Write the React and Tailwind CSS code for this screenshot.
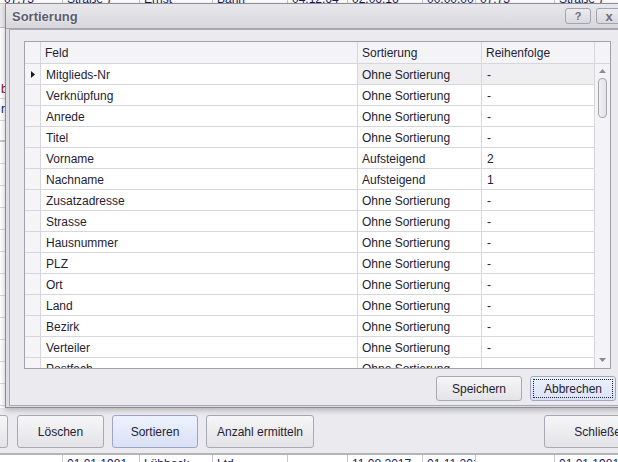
import React from "react";

const rows = [
  ["Mitglieds-Nr", "Ohne Sortierung", "-"],
  ["Verknüpfung", "Ohne Sortierung", "-"],
  ["Anrede", "Ohne Sortierung", "-"],
  ["Titel", "Ohne Sortierung", "-"],
  ["Vorname", "Aufsteigend", "2"],
  ["Nachname", "Aufsteigend", "1"],
  ["Zusatzadresse", "Ohne Sortierung", "-"],
  ["Strasse", "Ohne Sortierung", "-"],
  ["Hausnummer", "Ohne Sortierung", "-"],
  ["PLZ", "Ohne Sortierung", "-"],
  ["Ort", "Ohne Sortierung", "-"],
  ["Land", "Ohne Sortierung", "-"],
  ["Bezirk", "Ohne Sortierung", "-"],
  ["Verteiler", "Ohne Sortierung", "-"],
  ["Postfach", "Ohne Sortierung", "-"],
];

const bgCells = [63, 77, 73, 75, 60, 75, 53, 79, 70];

function BgRow({ texts, offset }) {
  return (
    <div className="flex h-full overflow-hidden">
      {bgCells.map((w, i) => (
        <div
          key={i}
          className="relative shrink-0 border-r border-[#c8c8d0] overflow-hidden"
          style={{ width: w }}
        >
          <div className="absolute left-[4px] whitespace-nowrap text-[12px] text-[#1a1a60]" style={{ top: offset }}>
            {texts[i % texts.length]}
          </div>
        </div>
      ))}
    </div>
  );
}

function Btn({ children, w, blue, focus, h = "h-[25px]" }) {
  return (
    <div
      className={`${h} shrink-0 rounded-[3px] border flex items-center justify-center text-[12px] text-[#1f2233] ${
        blue
          ? "border-[#9ea6c4] bg-gradient-to-b from-[#eef2fd] to-[#d9e1f7]"
          : "border-[#a9a9b3] bg-gradient-to-b from-[#f6f6f8] to-[#e4e4e8]"
      }`}
      style={{ width: w }}
    >
      {focus ? (
        <div className="m-[2px] w-full h-[calc(100%-4px)] border border-dotted border-[#202030] flex items-center justify-center">
          {children}
        </div>
      ) : (
        children
      )}
    </div>
  );
}

export default function App() {
  return (
    <div className="relative w-[618px] h-[462px] overflow-hidden bg-white font-['Liberation_Sans',Arial,sans-serif] text-[12px] text-[#1f2233]">
      {/* background application */}
      <div className="flex flex-col h-full">
        <div className="h-[408px] flex flex-col">
          <div className="h-[4px] border-b border-[#c8c8d0]">
            <BgRow texts={["07.73", "Straße 7", "Ernst", "Bahn", "04.12.64", "02.06.16", "00.00.00"]} offset={-10} />
          </div>
          <div className="flex-1 flex flex-col">
            <div className="h-[24px] bg-[#ececf0] border-b border-[#c0c0c8]"></div>
            <div className="h-[49px] bg-white"></div>
            <div className="h-[22px] border-b border-[#d8d8de] pl-[1px] pt-[3px] text-[#7a1020]">b</div>
            <div className="h-[22px] border-b border-[#d8d8de] pl-[1px] pt-[1px] text-[#10208a]">r</div>
            <div className="h-[21px] border-b-2 border-[#c8c8d0]"></div>
            {Array.from({ length: 12 }).map((_, i) => (
              <div key={i} className="h-[22px] border-b border-[#d8d8de]"></div>
            ))}
          </div>
        </div>
        <div className="h-[47px] bg-[#ebebef] border-b-2 border-[#b4b4bc] flex items-start pt-[7px] pl-[17px] gap-[8px] relative">
          <div className="absolute left-[-60px] top-[7px]">
            <Btn w={68} h="h-[33px]">Neu</Btn>
          </div>
          <Btn w={87} h="h-[33px]">Löschen</Btn>
          <Btn w={86} h="h-[33px]" blue>Sortieren</Btn>
          <Btn w={108} h="h-[33px]">Anzahl ermitteln</Btn>
          <div className="ml-[222px]">
            <Btn w={114} h="h-[33px]">Schließen</Btn>
          </div>
        </div>
        <div className="flex-1">
          <BgRow texts={["", "01.01.1981", "Lübbeck", "Ltd", "", "11.08.2017", "01.11.2019"]} offset={0} />
        </div>
      </div>

      {/* dialog window */}
      <div className="absolute left-[5px] top-[3px] w-[640px] h-[405px] border border-[#8c8c96] bg-[#dcdce2] flex flex-col shadow-[0_2px_6px_rgba(0,0,0,0.25)]">
        {/* title bar */}
        <div className="h-[25px] shrink-0 flex items-center bg-gradient-to-b from-[#e8e8ec] to-[#d6d6dc] border-b border-[#a6a6ae] relative">
          <span className="pl-[6px] pt-[1px] text-[13px] font-bold text-[#5c5c6e] [text-shadow:0_0_3px_rgba(255,255,255,0.9)]">
            Sortierung
          </span>
          <div className="absolute left-[559px] top-[4px] flex gap-[5px]">
            <div className="w-[26px] h-[16px] rounded-[3px] border border-[#a4a4ae] bg-gradient-to-b from-[#ececf0] to-[#d8d8de] flex items-center justify-center text-[11px] font-bold text-[#6e6e78] leading-none">
              ?
            </div>
            <div className="w-[26px] h-[16px] rounded-[3px] border border-[#a4a4ae] bg-gradient-to-b from-[#ececf0] to-[#d8d8de] flex items-center justify-center text-[13px] font-bold text-[#6e6e78] leading-none">
              x
            </div>
          </div>
        </div>
        {/* client */}
        <div className="flex-1 ml-[3px] mb-[1px] border border-[#a8a8b2] bg-[#ebebef] flex flex-col pl-[14px] pt-[11px]">
          {/* grid */}
          <div className="w-[587px] h-[328px] border border-[#a2a2ac] bg-white flex overflow-hidden">
            <div className="w-[570px] flex flex-col">
              {/* header */}
              <div className="h-[22px] shrink-0 flex border-b border-[#d6d6dc] bg-[#f4f4f6]">
                <div className="w-[16px] border-r border-[#d6d6dc]"></div>
                <div className="w-[317px] border-r border-[#d6d6dc] pl-[4px] pt-[1px] flex items-center">Feld</div>
                <div className="w-[124px] border-r border-[#d6d6dc] pl-[4px] pt-[1px] flex items-center">Sortierung</div>
                <div className="w-[113px] border-r border-[#d6d6dc] pl-[4px] pt-[1px] flex items-center">Reihenfolge</div>
              </div>
              <div className="flex-1 overflow-hidden">
                {rows.map((r, i) => (
                  <div key={i} className="h-[21px] flex border-b border-[#d6d6dc]">
                    <div className="w-[16px] shrink-0 border-r border-[#d6d6dc] bg-[#f5f5f7] flex items-center justify-center">
                      {i === 0 && (
                        <svg width="4" height="7" viewBox="0 0 4 7">
                          <path d="M0 0 L4 3.5 L0 7 Z" fill="#1a1a1a" />
                        </svg>
                      )}
                    </div>
                    <div className="w-[317px] shrink-0 border-r border-[#d6d6dc] pl-[5px] pt-[1px] flex items-center whitespace-nowrap">
                      {r[0]}
                    </div>
                    <div className={`w-[124px] shrink-0 border-r border-[#d6d6dc] pl-[4px] pt-[1px] flex items-center whitespace-nowrap ${i === 0 ? "bg-[#efeff2]" : ""}`}>
                      {r[1]}
                    </div>
                    <div className={`w-[113px] shrink-0 border-r border-[#d6d6dc] pl-[5px] pt-[1px] flex items-center ${i === 0 ? "bg-[#efeff2]" : ""}`}>
                      {r[2]}
                    </div>
                  </div>
                ))}
              </div>
            </div>
            {/* scrollbar */}
            <div className="w-[15px] flex flex-col">
              <div className="h-[22px] shrink-0 bg-[#f4f4f6] border-b border-[#d6d6dc]"></div>
              <div className="flex-1 bg-[#f4f4f6] flex flex-col items-center pt-[5px] pb-[6px]">
                <svg width="7" height="4" viewBox="0 0 7 4">
                  <path d="M0 4 L3.5 0 L7 4 Z" fill="#8a8a94" />
                </svg>
                <div className="mt-[5px] w-[9px] h-[40px] rounded-[4px] border border-[#a4a4ae] bg-gradient-to-r from-[#f0f0f3] to-[#e2e2e7]"></div>
                <div className="flex-1"></div>
                <svg width="7" height="4" viewBox="0 0 7 4">
                  <path d="M0 0 L3.5 4 L7 0 Z" fill="#8a8a94" />
                </svg>
              </div>
            </div>
          </div>
          {/* buttons */}
          <div className="flex pl-[412px] pt-[7px] gap-[8px]">
            <Btn w={86}>Speichern</Btn>
            <Btn w={86} blue focus>Abbrechen</Btn>
          </div>
        </div>
      </div>
    </div>
  );
}
